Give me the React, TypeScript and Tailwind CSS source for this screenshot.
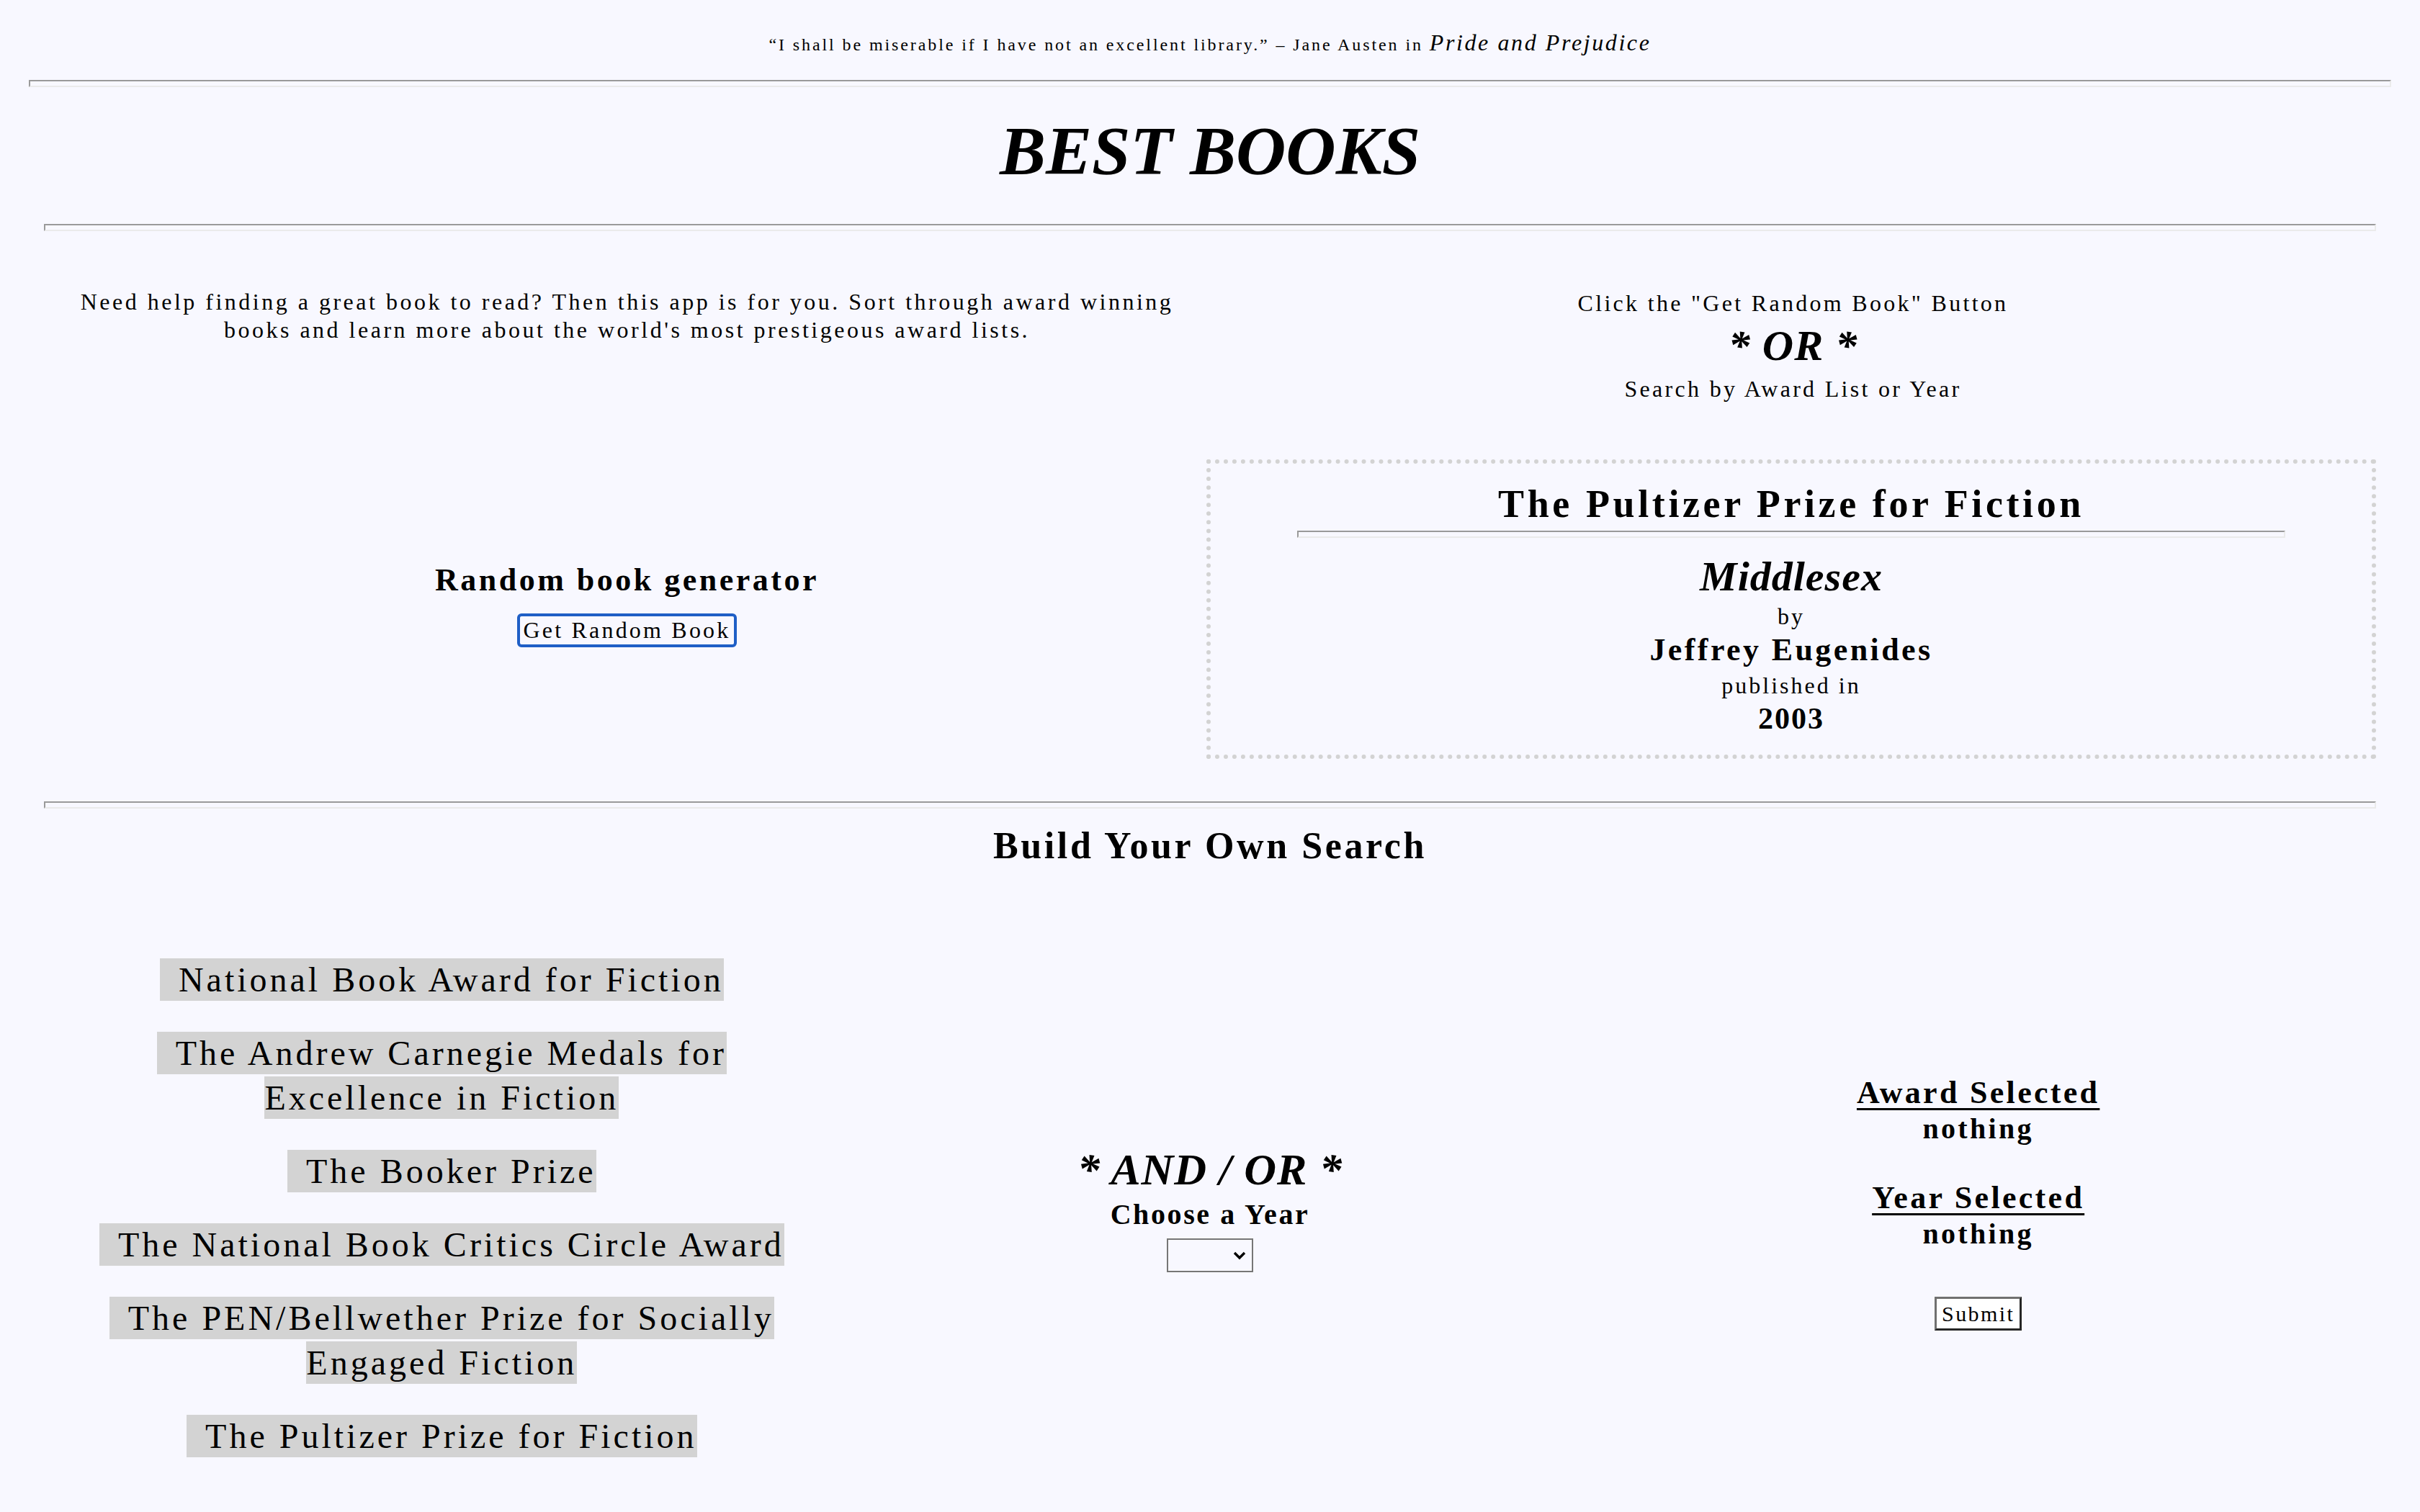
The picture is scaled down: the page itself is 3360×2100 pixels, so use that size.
import React, { useState } from 'react';
import { clsx } from 'clsx';

const awards = [
  'National Book Award for Fiction',
  'The Andrew Carnegie Medals for Excellence in Fiction',
  'The Booker Prize',
  'The National Book Critics Circle Award',
  'The PEN/Bellwether Prize for Socially Engaged Fiction',
  'The Pultizer Prize for Fiction',
];

const Rule: React.FC<{ className?: string }> = ({ className }) => (
  <div
    className={clsx(
      'h-[10px] border-2 border-t-[#9a9a9a] border-l-[#9a9a9a] border-b-[#ebebeb] border-r-[#ebebeb]',
      className
    )}
  />
);

const App: React.FC = () => {
  const [award, setAward] = useState<string | null>(null);

  return (
    <div className="min-h-screen bg-[#f8f8ff] text-black font-['Liberation_Serif',serif] pb-[70px]">
      {/* Quote */}
      <p className="pt-[41px] text-center leading-[36px] text-[24px] tracking-[2.9px]">
        “I shall be miserable if I have not an excellent library.” – Jane Austen in{' '}
        <i className="text-[32px] tracking-[2.6px]">Pride and Prejudice</i>
      </p>
      <Rule className="mx-[40px] mt-[31px]" />

      <h1 className="mt-[41px] text-center text-[96px] leading-[96px] font-bold italic">BEST BOOKS</h1>

      <div className="mx-[61px]">
        <Rule className="mt-[53px]" />

        {/* Intro */}
        <div className="grid grid-cols-2 mt-[79px]">
          <p className="px-[30px] text-center text-[32px] leading-[39px] tracking-[3.5px]">
            Need help finding a great book to read? Then this app is for you. Sort through award winning books and learn more about the world's most prestigeous award lists.
          </p>
          <div className="text-center tracking-[3.3px] pt-[2px]">
            <p className="text-[32px] leading-[39px]">Click the "Get Random Book" Button</p>
            <p className="text-[60px] leading-[78px] font-bold italic tracking-[1px]">* OR *</p>
            <p className="text-[32px] leading-[42px]">Search by Award List or Year</p>
          </div>
        </div>

        {/* Random book */}
        <div className="grid grid-cols-2 items-center mt-[77px]">
          <div className="flex flex-col items-center pb-[14px]">
            <h3 className="text-[44px] leading-[52px] font-bold tracking-[3.5px]">Random book generator</h3>
            <button className="mt-[20px] h-[47px] px-[5px] border-[4px] border-[#1f5fc6] rounded-[6px] text-[32px] leading-none tracking-[3.2px]">
              Get Random Book
            </button>
          </div>
          <div className="-ml-[5px] border-[6px] border-dotted border-[#d3d3d3] text-center pt-[26px] pb-[26px]">
            <h2 className="text-[54px] leading-[60px] font-bold tracking-[4.6px]">The Pultizer Prize for Fiction</h2>
            <Rule className="mx-[120px] mt-[7px]" />
            <p className="mt-[19px] text-[58px] leading-[70px] font-bold italic tracking-[1px]">Middlesex</p>
            <p className="text-[32px] leading-[40px] tracking-[3px]">by</p>
            <p className="text-[44px] leading-[54px] font-bold tracking-[3.4px]">Jeffrey Eugenides</p>
            <p className="text-[32px] leading-[44px] tracking-[3px]">published in</p>
            <p className="text-[42px] leading-[48px] font-bold tracking-[2px]">2003</p>
          </div>
        </div>

        <Rule className="mt-[59px]" />
        <h2 className="mt-[22px] text-center text-[52px] leading-[60px] font-bold tracking-[3.6px]">Build Your Own Search</h2>
      </div>

      {/* Build your own search */}
      <div className="grid grid-cols-3 items-center mx-[80px] mt-[125px]">
        <div className="w-[1000px] mx-auto flex flex-col gap-[40px] text-center">
          {awards.map(a => (
            <div key={a} className="text-[48px] leading-[62px] tracking-[4px]">
              <span
                onClick={() => setAward(a)}
                className="bg-[#d3d3d3] pl-[26px] py-[3px] cursor-pointer"
              >
                {a}
              </span>
            </div>
          ))}
        </div>

        <div className="flex flex-col items-center">
          <p className="text-[62px] leading-[70px] font-bold italic tracking-[1px]">* AND / OR *</p>
          <p className="text-[40px] leading-[56px] font-bold tracking-[2.6px]">Choose a Year</p>
          <div className="mt-[5px] w-[120px] h-[47px] border-2 border-[#767676] flex items-center justify-end pr-[8px]">
            <svg width="18" height="12" viewBox="0 0 18 12" fill="none">
              <path d="M2 2 L9 9 L16 2" stroke="#000" strokeWidth="3.4" />
            </svg>
          </div>
        </div>

        <div className="flex flex-col items-center text-center pb-[16px] tracking-[3.3px]">
          <p className="text-[44px] leading-[52px] font-bold underline decoration-[3px] underline-offset-[7px]">Award Selected</p>
          <p className="text-[40px] leading-[48px] font-bold">{award ?? 'nothing'}</p>
          <p className="mt-[46px] text-[44px] leading-[52px] font-bold underline decoration-[3px] underline-offset-[7px]">Year Selected</p>
          <p className="text-[40px] leading-[48px] font-bold">nothing</p>
          <button className="mt-[63px] h-[47px] px-[7px] bg-white border-[3px] border-t-[#707070] border-l-[#707070] border-b-[#262626] border-r-[#262626] text-[30px] leading-none tracking-[2.4px]">
            Submit
          </button>
        </div>
      </div>
    </div>
  );
};

export default App;
